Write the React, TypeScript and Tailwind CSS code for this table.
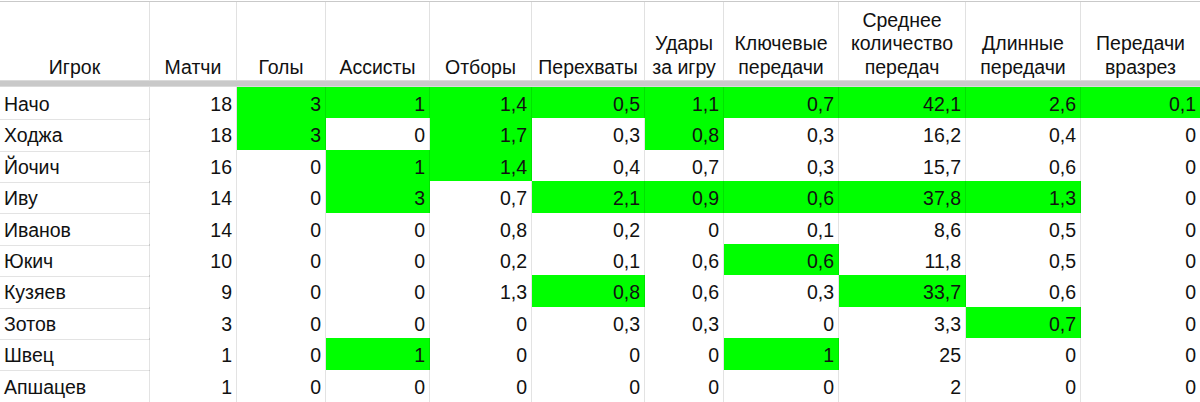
import React from "react";

interface PlayerRow {
  name: string;
  values: string[];
  // indexes of highlighted value cells
  green: number[];
}

const headers: string[][] = [
  ["Игрок"],
  ["Матчи"],
  ["Голы"],
  ["Ассисты"],
  ["Отборы"],
  ["Перехваты"],
  ["Удары", "за игру"],
  ["Ключевые", "передачи"],
  ["Среднее", "количество", "передач"],
  ["Длинные", "передачи"],
  ["Передачи", "вразрез"],
];

const rows: PlayerRow[] = [
  { name: "Начо", values: ["18", "3", "1", "1,4", "0,5", "1,1", "0,7", "42,1", "2,6", "0,1"], green: [1, 2, 3, 4, 5, 6, 7, 8, 9] },
  { name: "Ходжа", values: ["18", "3", "0", "1,7", "0,3", "0,8", "0,3", "16,2", "0,4", "0"], green: [1, 3, 5] },
  { name: "Йочич", values: ["16", "0", "1", "1,4", "0,4", "0,7", "0,3", "15,7", "0,6", "0"], green: [2, 3] },
  { name: "Иву", values: ["14", "0", "3", "0,7", "2,1", "0,9", "0,6", "37,8", "1,3", "0"], green: [2, 4, 5, 6, 7, 8] },
  { name: "Иванов", values: ["14", "0", "0", "0,8", "0,2", "0", "0,1", "8,6", "0,5", "0"], green: [] },
  { name: "Юкич", values: ["10", "0", "0", "0,2", "0,1", "0,6", "0,6", "11,8", "0,5", "0"], green: [6] },
  { name: "Кузяев", values: ["9", "0", "0", "1,3", "0,8", "0,6", "0,3", "33,7", "0,6", "0"], green: [4, 7] },
  { name: "Зотов", values: ["3", "0", "0", "0", "0,3", "0,3", "0", "3,3", "0,7", "0"], green: [8] },
  { name: "Швец", values: ["1", "0", "1", "0", "0", "0", "1", "25", "0", "0"], green: [2, 6] },
  { name: "Апшацев", values: ["1", "0", "0", "0", "0", "0", "0", "2", "0", "0"], green: [] },
];

const gridCols =
  "grid grid-cols-[150px_87px_89px_104px_102px_113px_79px_115px_127px_115px_119px]";

export default function App() {
  return (
    <div
      className="w-[1200px] h-[402px] overflow-hidden bg-white pt-px text-[19.5px] text-[#111]"
      style={{ fontFamily: '"Liberation Sans", Arial, sans-serif' }}
    >
      {/* Header */}
      <div className={`${gridCols} border-t border-[#c9c9c9]`}>
        {headers.map((lines, i) => (
          <div
            key={i}
            className={`h-[78px] flex flex-col justify-end items-center text-center leading-[23.5px] pb-px ${
              i < headers.length - 1 ? "border-r border-[#e1e1e1]" : ""
            }`}
          >
            {lines.map((l) => (
              <span key={l} className="whitespace-nowrap">
                {l}
              </span>
            ))}
          </div>
        ))}
      </div>

      {/* Frozen row separator */}
      <div className="h-[7px] bg-[#c9c9c9] border-y border-[#dadada]" />

      {/* Data rows */}
      {rows.map((row) => (
        <div key={row.name} className={`${gridCols} h-[31.4px]`}>
          <div className="flex items-center pl-[4px] pt-[3px] border-r border-b border-black/[0.11]">
            {row.name}
          </div>
          {row.values.map((v, j) => (
            <div
              key={j}
              className={`flex items-center justify-end pr-[4px] pt-[3px] border-b border-black/[0.11] ${
                j < row.values.length - 1 ? "border-r" : ""
              } ${row.green.includes(j) ? "bg-[#00ff00]" : "bg-white"}`}
            >
              {v}
            </div>
          ))}
        </div>
      ))}
    </div>
  );
}
